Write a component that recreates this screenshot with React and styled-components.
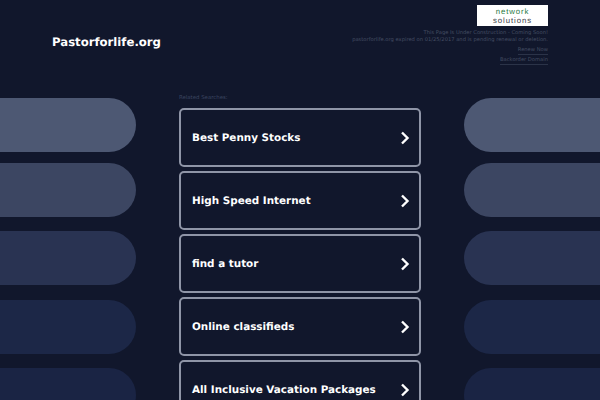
import React from "react";
import styled, { createGlobalStyle } from "styled-components";

const Global = createGlobalStyle`
  html, body { margin: 0; padding: 0; background: #11172c; }
  body { font-family: "DejaVu Sans", sans-serif; text-rendering: geometricPrecision; }
`;

const Page = styled.div`
  width: 600px;
  height: 400px;
  overflow: hidden;
  background: #11172c;
  display: flex;
  flex-direction: column;
`;

const Header = styled.header`
  height: 98px;
  flex: none;
  display: flex;
  justify-content: space-between;
  box-sizing: border-box;
  padding: 5px 52px 0;
`;

const Domain = styled.h1`
  margin: 30px 0 0;
  font-size: 11.7px;
  line-height: 15px;
  font-weight: 700;
  color: #fff;
`;

const Notice = styled.div`
  display: flex;
  flex-direction: column;
  align-items: flex-end;
  font-size: 5.2px;
  line-height: 7px;
  color: #454e63;
`;

const Logo = styled.div`
  width: 71px;
  height: 21px;
  background: #fff;
  display: flex;
  flex-direction: column;
  align-items: center;
  justify-content: center;
  font-family: "Liberation Sans", sans-serif;
  font-size: 7.8px;
  line-height: 9px;
  letter-spacing: 0.9px;
  margin-bottom: 4px;
`;

const LogoGreen = styled.span`
  color: #1f7a45;
`;

const LogoDark = styled.span`
  color: #3a4048;
`;

const NoticeLink = styled.a`
  color: #454e63;
  border-bottom: 1px solid #2b3348;
  line-height: 6px;
  margin-top: 3px;
  padding-bottom: 1px;
  &:last-child { margin-top: 2px; }
`;

const Main = styled.main`
  display: flex;
  justify-content: space-between;
  flex: 1;
  min-height: 0;
`;

const Side = styled.div`
  width: 136px;
  display: flex;
  flex-direction: column;
`;

const Pill = styled.div`
  flex: none;
  height: 54px;
  margin-top: ${(p) => p.$top}px;
  background: ${(p) => p.$bg};
  border-radius: ${(p) => (p.$left ? "0 27px 27px 0" : "27px 0 0 27px")};
`;

const Center = styled.div`
  width: 242px;
  display: flex;
  flex-direction: column;
`;

const Related = styled.div`
  height: 10px;
  margin-top: -4px;
  margin-bottom: 4px;
  font-size: 5.4px;
  line-height: 8px;
  color: #3b4560;
`;

const Card = styled.a`
  flex: none;
  box-sizing: border-box;
  height: 59px;
  margin-top: 2px;
  margin-bottom: 2px;
  border: 2px solid #8f95a7;
  border-radius: 5px;
  display: flex;
  align-items: center;
  justify-content: space-between;
  padding: 0 9px 0 11px;
  color: #fff;
  font-size: 10.4px;
  font-weight: 700;
  white-space: nowrap;
`;

const pills = [
  ["#4d5873", 0],
  ["#3c4662", 11],
  ["#293352", 14],
  ["#1c2747", 15],
  ["#1a2444", 14],
];

const items = [
  "Best Penny Stocks",
  "High Speed Internet",
  "find a tutor",
  "Online classifieds",
  "All Inclusive Vacation Packages",
];

const Chevron = () => (
  <svg width="10" height="14" viewBox="0 0 10 14" fill="none">
    <path d="M2 1.5 L7.5 7 L2 12.5" stroke="#fff" strokeWidth="2.4" />
  </svg>
);

const Column = ({ left }) => (
  <Side>
    {pills.map(([bg, top]) => (
      <Pill key={bg} $bg={bg} $top={top} $left={left} />
    ))}
  </Side>
);

export default function App() {
  return (
    <Page>
      <Global />
      <Header>
        <Domain>Pastorforlife.org</Domain>
        <Notice>
          <Logo>
            <LogoGreen>network</LogoGreen>
            <LogoDark>solutions</LogoDark>
          </Logo>
          <span>This Page Is Under Construction - Coming Soon!</span>
          <span>pastorforlife.org expired on 01/25/2017 and is pending renewal or deletion.</span>
          <NoticeLink>Renew Now</NoticeLink>
          <NoticeLink>Backorder Domain</NoticeLink>
        </Notice>
      </Header>
      <Main>
        <Column left />
        <Center>
          <Related>Related Searches:</Related>
          {items.map((t) => (
            <Card key={t}>
              {t}
              <Chevron />
            </Card>
          ))}
        </Center>
        <Column />
      </Main>
    </Page>
  );
}
